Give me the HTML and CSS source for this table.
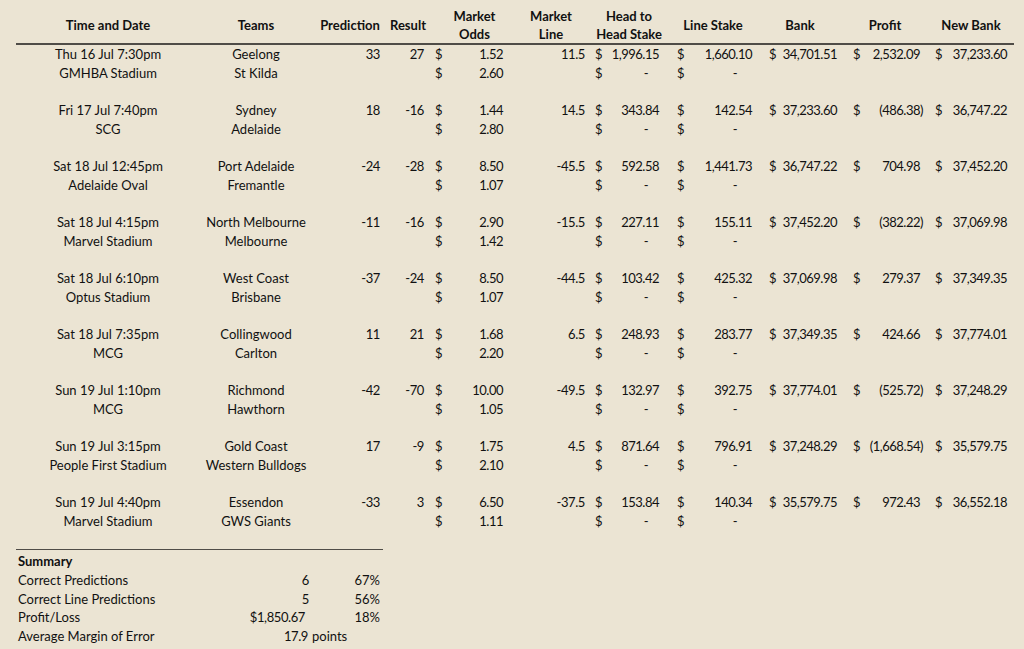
FILE: index.html
```html
<!DOCTYPE html>
<html lang="en">
<head>
<meta charset="utf-8">
<title>Round results</title>
<link rel="stylesheet" href="styles.css">
</head>
<body>
<div class="sheet">
  <div class="row head">
    <div class="h c-a">Time and Date</div>
    <div class="h c-b">Teams</div>
    <div class="h c-c">Prediction</div>
    <div class="h c-d">Result</div>
    <div class="h c-e">Market<br>Odds</div>
    <div class="h c-f">Market<br>Line</div>
    <div class="h c-g">Head to<br>Head Stake</div>
    <div class="h c-h">Line Stake</div>
    <div class="h c-i">Bank</div>
    <div class="h c-j">Profit</div>
    <div class="h c-k">New Bank</div>
  </div>

  <div class="row game">
    <div class="c-a ctr"><div>Thu 16 Jul 7:30pm</div><div>GMHBA Stadium</div></div>
    <div class="c-b ctr"><div>Geelong</div><div>St Kilda</div></div>
    <div class="c-c num">33</div>
    <div class="c-d num">27</div>
    <div class="c-e"><div class="acc"><span>$</span><span>1.52</span></div><div class="acc"><span>$</span><span>2.60</span></div></div>
    <div class="c-f num">11.5</div>
    <div class="c-g"><div class="acc"><span>$</span><span>1,996.15</span></div><div class="acc"><span>$</span><span class="dash">-</span></div></div>
    <div class="c-h"><div class="acc"><span>$</span><span>1,660.10</span></div><div class="acc"><span>$</span><span class="dash">-</span></div></div>
    <div class="c-i"><div class="acc"><span>$</span><span>34,701.51</span></div></div>
    <div class="c-j"><div class="acc"><span>$</span><span>2,532.09</span></div></div>
    <div class="c-k"><div class="acc"><span>$</span><span>37,233.60</span></div></div>
  </div>

  <div class="row game">
    <div class="c-a ctr"><div>Fri 17 Jul 7:40pm</div><div>SCG</div></div>
    <div class="c-b ctr"><div>Sydney</div><div>Adelaide</div></div>
    <div class="c-c num">18</div>
    <div class="c-d num">-16</div>
    <div class="c-e"><div class="acc"><span>$</span><span>1.44</span></div><div class="acc"><span>$</span><span>2.80</span></div></div>
    <div class="c-f num">14.5</div>
    <div class="c-g"><div class="acc"><span>$</span><span>343.84</span></div><div class="acc"><span>$</span><span class="dash">-</span></div></div>
    <div class="c-h"><div class="acc"><span>$</span><span>142.54</span></div><div class="acc"><span>$</span><span class="dash">-</span></div></div>
    <div class="c-i"><div class="acc"><span>$</span><span>37,233.60</span></div></div>
    <div class="c-j"><div class="acc"><span>$</span><span class="neg">(486.38)</span></div></div>
    <div class="c-k"><div class="acc"><span>$</span><span>36,747.22</span></div></div>
  </div>

  <div class="row game">
    <div class="c-a ctr"><div>Sat 18 Jul 12:45pm</div><div>Adelaide Oval</div></div>
    <div class="c-b ctr"><div>Port Adelaide</div><div>Fremantle</div></div>
    <div class="c-c num">-24</div>
    <div class="c-d num">-28</div>
    <div class="c-e"><div class="acc"><span>$</span><span>8.50</span></div><div class="acc"><span>$</span><span>1.07</span></div></div>
    <div class="c-f num">-45.5</div>
    <div class="c-g"><div class="acc"><span>$</span><span>592.58</span></div><div class="acc"><span>$</span><span class="dash">-</span></div></div>
    <div class="c-h"><div class="acc"><span>$</span><span>1,441.73</span></div><div class="acc"><span>$</span><span class="dash">-</span></div></div>
    <div class="c-i"><div class="acc"><span>$</span><span>36,747.22</span></div></div>
    <div class="c-j"><div class="acc"><span>$</span><span>704.98</span></div></div>
    <div class="c-k"><div class="acc"><span>$</span><span>37,452.20</span></div></div>
  </div>

  <div class="row game">
    <div class="c-a ctr"><div>Sat 18 Jul 4:15pm</div><div>Marvel Stadium</div></div>
    <div class="c-b ctr"><div>North Melbourne</div><div>Melbourne</div></div>
    <div class="c-c num">-11</div>
    <div class="c-d num">-16</div>
    <div class="c-e"><div class="acc"><span>$</span><span>2.90</span></div><div class="acc"><span>$</span><span>1.42</span></div></div>
    <div class="c-f num">-15.5</div>
    <div class="c-g"><div class="acc"><span>$</span><span>227.11</span></div><div class="acc"><span>$</span><span class="dash">-</span></div></div>
    <div class="c-h"><div class="acc"><span>$</span><span>155.11</span></div><div class="acc"><span>$</span><span class="dash">-</span></div></div>
    <div class="c-i"><div class="acc"><span>$</span><span>37,452.20</span></div></div>
    <div class="c-j"><div class="acc"><span>$</span><span class="neg">(382.22)</span></div></div>
    <div class="c-k"><div class="acc"><span>$</span><span>37,069.98</span></div></div>
  </div>

  <div class="row game">
    <div class="c-a ctr"><div>Sat 18 Jul 6:10pm</div><div>Optus Stadium</div></div>
    <div class="c-b ctr"><div>West Coast</div><div>Brisbane</div></div>
    <div class="c-c num">-37</div>
    <div class="c-d num">-24</div>
    <div class="c-e"><div class="acc"><span>$</span><span>8.50</span></div><div class="acc"><span>$</span><span>1.07</span></div></div>
    <div class="c-f num">-44.5</div>
    <div class="c-g"><div class="acc"><span>$</span><span>103.42</span></div><div class="acc"><span>$</span><span class="dash">-</span></div></div>
    <div class="c-h"><div class="acc"><span>$</span><span>425.32</span></div><div class="acc"><span>$</span><span class="dash">-</span></div></div>
    <div class="c-i"><div class="acc"><span>$</span><span>37,069.98</span></div></div>
    <div class="c-j"><div class="acc"><span>$</span><span>279.37</span></div></div>
    <div class="c-k"><div class="acc"><span>$</span><span>37,349.35</span></div></div>
  </div>

  <div class="row game">
    <div class="c-a ctr"><div>Sat 18 Jul 7:35pm</div><div>MCG</div></div>
    <div class="c-b ctr"><div>Collingwood</div><div>Carlton</div></div>
    <div class="c-c num">11</div>
    <div class="c-d num">21</div>
    <div class="c-e"><div class="acc"><span>$</span><span>1.68</span></div><div class="acc"><span>$</span><span>2.20</span></div></div>
    <div class="c-f num">6.5</div>
    <div class="c-g"><div class="acc"><span>$</span><span>248.93</span></div><div class="acc"><span>$</span><span class="dash">-</span></div></div>
    <div class="c-h"><div class="acc"><span>$</span><span>283.77</span></div><div class="acc"><span>$</span><span class="dash">-</span></div></div>
    <div class="c-i"><div class="acc"><span>$</span><span>37,349.35</span></div></div>
    <div class="c-j"><div class="acc"><span>$</span><span>424.66</span></div></div>
    <div class="c-k"><div class="acc"><span>$</span><span>37,774.01</span></div></div>
  </div>

  <div class="row game">
    <div class="c-a ctr"><div>Sun 19 Jul 1:10pm</div><div>MCG</div></div>
    <div class="c-b ctr"><div>Richmond</div><div>Hawthorn</div></div>
    <div class="c-c num">-42</div>
    <div class="c-d num">-70</div>
    <div class="c-e"><div class="acc"><span>$</span><span>10.00</span></div><div class="acc"><span>$</span><span>1.05</span></div></div>
    <div class="c-f num">-49.5</div>
    <div class="c-g"><div class="acc"><span>$</span><span>132.97</span></div><div class="acc"><span>$</span><span class="dash">-</span></div></div>
    <div class="c-h"><div class="acc"><span>$</span><span>392.75</span></div><div class="acc"><span>$</span><span class="dash">-</span></div></div>
    <div class="c-i"><div class="acc"><span>$</span><span>37,774.01</span></div></div>
    <div class="c-j"><div class="acc"><span>$</span><span class="neg">(525.72)</span></div></div>
    <div class="c-k"><div class="acc"><span>$</span><span>37,248.29</span></div></div>
  </div>

  <div class="row game">
    <div class="c-a ctr"><div>Sun 19 Jul 3:15pm</div><div>People First Stadium</div></div>
    <div class="c-b ctr"><div>Gold Coast</div><div>Western Bulldogs</div></div>
    <div class="c-c num">17</div>
    <div class="c-d num">-9</div>
    <div class="c-e"><div class="acc"><span>$</span><span>1.75</span></div><div class="acc"><span>$</span><span>2.10</span></div></div>
    <div class="c-f num">4.5</div>
    <div class="c-g"><div class="acc"><span>$</span><span>871.64</span></div><div class="acc"><span>$</span><span class="dash">-</span></div></div>
    <div class="c-h"><div class="acc"><span>$</span><span>796.91</span></div><div class="acc"><span>$</span><span class="dash">-</span></div></div>
    <div class="c-i"><div class="acc"><span>$</span><span>37,248.29</span></div></div>
    <div class="c-j"><div class="acc"><span>$</span><span class="neg">(1,668.54)</span></div></div>
    <div class="c-k"><div class="acc"><span>$</span><span>35,579.75</span></div></div>
  </div>

  <div class="row game">
    <div class="c-a ctr"><div>Sun 19 Jul 4:40pm</div><div>Marvel Stadium</div></div>
    <div class="c-b ctr"><div>Essendon</div><div>GWS Giants</div></div>
    <div class="c-c num">-33</div>
    <div class="c-d num">3</div>
    <div class="c-e"><div class="acc"><span>$</span><span>6.50</span></div><div class="acc"><span>$</span><span>1.11</span></div></div>
    <div class="c-f num">-37.5</div>
    <div class="c-g"><div class="acc"><span>$</span><span>153.84</span></div><div class="acc"><span>$</span><span class="dash">-</span></div></div>
    <div class="c-h"><div class="acc"><span>$</span><span>140.34</span></div><div class="acc"><span>$</span><span class="dash">-</span></div></div>
    <div class="c-i"><div class="acc"><span>$</span><span>35,579.75</span></div></div>
    <div class="c-j"><div class="acc"><span>$</span><span>972.43</span></div></div>
    <div class="c-k"><div class="acc"><span>$</span><span>36,552.18</span></div></div>
  </div>

  <div class="summary">
    <div class="s-label s-title">Summary</div><div></div><div></div>
    <div class="s-label">Correct Predictions</div><div class="s-val">6</div><div class="s-pct">67%</div>
    <div class="s-label">Correct Line Predictions</div><div class="s-val">5</div><div class="s-pct">56%</div>
    <div class="s-label">Profit/Loss</div><div class="s-val s-money">$1,850.67</div><div class="s-pct">18%</div>
    <div class="s-label">Average Margin of Error</div><div class="s-val s-avg">17.9</div><div class="s-unit">points</div>
  </div>
</div>
</body>
</html>
```

FILE: styles.css
```css
html, body {
  margin: 0;
  padding: 0;
  background: #ebe4d3;
}

body {
  font-family: Lato, "Liberation Sans", sans-serif;
  font-size: 13px;
  color: #111111;
  width: 1024px;
  height: 649px;
  overflow: hidden;
}

.sheet {
  padding-left: 16px;
  width: 998px;
}

.row {
  display: grid;
  grid-template-columns: 184px 112px 76px 40px 93px 69px 78px 90px 84px 86px 86px;
}

.head {
  box-sizing: border-box;
  height: 45px;
  padding-top: 7px;
  border-bottom: 2px solid #4f4c47;
  font-weight: bold;
  align-items: center;
  line-height: 18px;
}

.h {
  text-align: center;
  white-space: nowrap;
}

.head .c-f {
  padding-right: 9px;
}

.game {
  line-height: 18.667px;
  padding-bottom: 18.667px;
  white-space: nowrap;
}

.ctr {
  text-align: center;
}

.num {
  text-align: right;
  letter-spacing: -0.4px;
}

.game .c-c { padding-right: 8px; }
.game .c-d { padding-right: 4px; }
.game .c-f { padding-right: 5px; }

.acc {
  display: flex;
  justify-content: space-between;
  letter-spacing: -0.5px;
}

.game .c-e .acc { padding: 0 18px 0 7px; }
.game .c-g .acc { padding: 0 9px 0 5px; }
.game .c-h .acc { padding: 0 6px 0 9px; }
.game .c-i .acc { padding: 0 5px 0 11px; }
.game .c-j .acc { padding: 0 8px 0 11px; }
.game .c-k .acc { padding: 0 7px 0 7px; }

.game .c-g .dash { padding-right: 11px; }
.game .c-h .dash { padding-right: 15px; }

.game .c-j .neg { margin-right: -3px; }

.summary {
  display: grid;
  grid-template-columns: 184px 112px 71px;
  width: 367px;
  border-top: 1px solid #4f4c47;
  line-height: 18.8px;
  padding-top: 2px;
  white-space: nowrap;
}

.s-label {
  padding-left: 2px;
}

.s-title {
  font-weight: bold;
}

.s-val {
  text-align: right;
  padding-right: 3px;
  letter-spacing: -0.4px;
}

.s-money {
  padding-right: 7px;
}

.s-avg {
  padding-right: 4px;
}

.s-pct {
  text-align: right;
  padding-right: 3px;
}

.s-unit {
  text-align: left;
}
```
